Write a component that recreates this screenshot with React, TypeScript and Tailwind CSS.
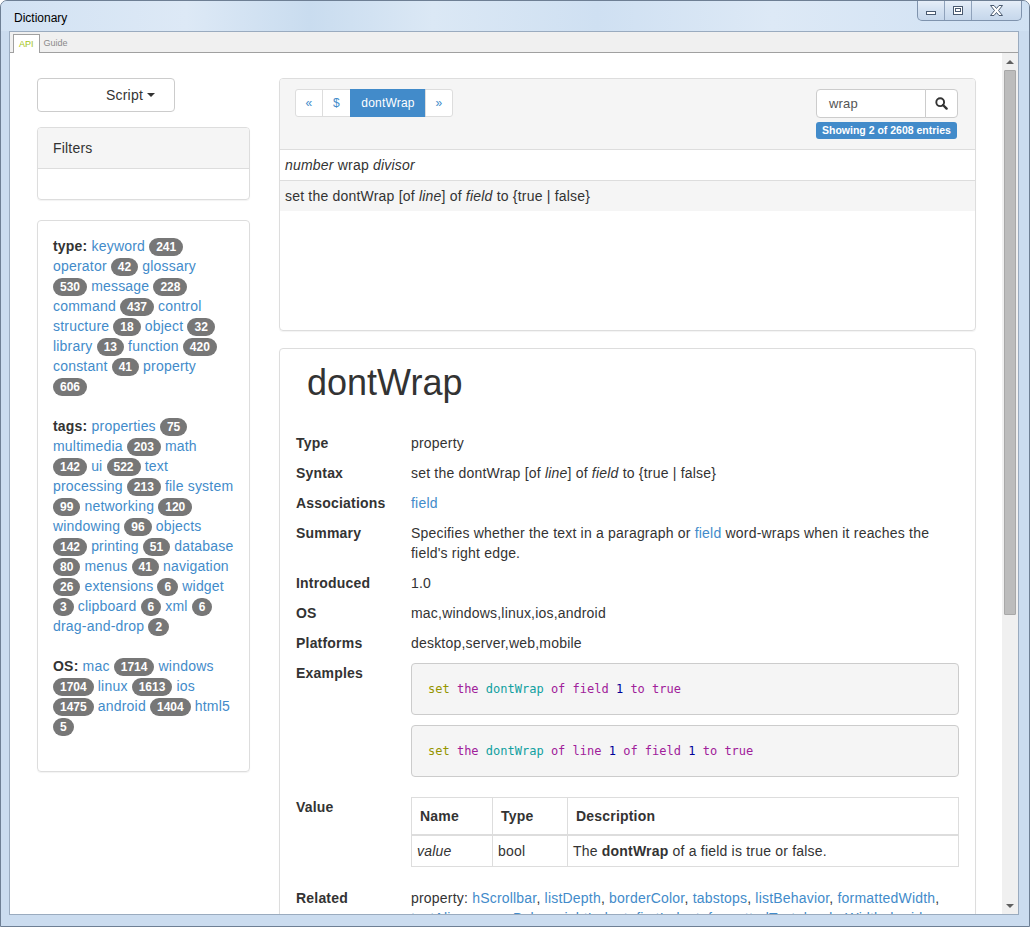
import React from 'react';

type Item = [string, number?];

// facet lines as they break in the panel
const typeLines: Item[][] = [
  [['keyword', 241]],
  [['operator', 42], ['glossary']],
  [['', 530], ['message', 228]],
  [['command', 437], ['control']],
  [['structure', 18], ['object', 32]],
  [['library', 13], ['function', 420]],
  [['constant', 41], ['property']],
  [['', 606]],
];

const tagLines: Item[][] = [
  [['properties', 75]],
  [['multimedia', 203], ['math']],
  [['', 142], ['ui', 522], ['text']],
  [['processing', 213], ['file system']],
  [['', 99], ['networking', 120]],
  [['windowing', 96], ['objects']],
  [['', 142], ['printing', 51], ['database']],
  [['', 80], ['menus', 41], ['navigation']],
  [['', 26], ['extensions', 6], ['widget']],
  [['', 3], ['clipboard', 6], ['xml', 6]],
  [['drag-and-drop', 2]],
];

const osLines: Item[][] = [
  [['mac', 1714], ['windows']],
  [['', 1704], ['linux', 1613], ['ios']],
  [['', 1475], ['android', 1404], ['html5']],
  [['', 5]],
];

const related = [
  'hScrollbar', 'listDepth', 'borderColor', 'tabstops', 'listBehavior', 'formattedWidth',
  'textAlign', 'spaceBelow', 'rightIndent', 'firstIndent', 'formattedText', 'borderWidth', 'hgrid',
  'vgrid', 'textSize', 'textFont', 'textStyle', 'threeD', 'showLines', 'lockText',
];

const Badge: React.FC<{ n: number }> = ({ n }) => (
  <span className="inline-block min-w-[10px] whitespace-nowrap rounded-[10px] bg-[#777] px-[7px] py-[3px] text-center align-middle text-[12px] font-bold leading-none tracking-normal text-white">
    {n}
  </span>
);

const FacetGroup: React.FC<{ label: string; lines: Item[][] }> = ({ label, lines }) => (
  <div className="mb-5">
    {lines.map((line, li) => (
      <div key={li} className="h-[20px] overflow-visible whitespace-nowrap">
        {li === 0 && (
          <>
            <b>{label}:</b>{' '}
          </>
        )}
        {line.map(([name, n], i) => (
          <React.Fragment key={i}>
            {i > 0 ? ' ' : ''}
            {name && <a className="cursor-pointer text-[#428bca]">{name}</a>}
            {name && n !== undefined ? ' ' : ''}
            {n !== undefined && <Badge n={n} />}
          </React.Fragment>
        ))}
      </div>
    ))}
  </div>
);

const Row: React.FC<{ label: string; children: React.ReactNode }> = ({ label, children }) => (
  <>
    <div className="font-bold">{label}</div>
    <div>{children}</div>
  </>
);

const K: React.FC<{ c: string; children: React.ReactNode }> = ({ c, children }) => (
  <span className={c}>{children}</span>
);

const kw = 'text-[#a0209a]';
const num = 'text-[#000099]';

const WindowButtons = () => (
  <div className="mr-[7px] flex h-[20px] overflow-hidden rounded-b-[5px] border border-t-0 border-[#7f93ad] bg-[linear-gradient(180deg,#e6eef8_0%,#d3e1f1_50%,#c6d7eb_100%)]">
    <div className="flex w-[27px] items-end justify-center border-r border-[#8fa2bb] pb-[5px]">
      <svg width="10" height="4" viewBox="0 0 10 4">
        <rect x="0.5" y="0.5" width="9" height="3" fill="#fff" stroke="#4a5a70" />
      </svg>
    </div>
    <div className="flex w-[27px] items-center justify-center border-r border-[#8fa2bb]">
      <svg width="10" height="9" viewBox="0 0 10 9">
        <rect x="0.5" y="0.5" width="9" height="8" fill="#fff" stroke="#4a5a70" />
        <rect x="2.5" y="2.5" width="5" height="3" fill="none" stroke="#4a5a70" />
      </svg>
    </div>
    <div className="flex w-[49px] items-center justify-center">
      <svg width="13" height="11" viewBox="0 0 13 11">
        <polygon
          points="0.5,0.5 4,0.5 6.5,3.5 9,0.5 12.5,0.5 8.5,5.5 12.5,10.5 9,10.5 6.5,7.5 4,10.5 0.5,10.5 4.5,5.5"
          fill="#fff"
          stroke="#4a5a70"
        />
      </svg>
    </div>
  </div>
);

export default function App() {
  return (
    <div className="flex h-[927px] w-[1030px] flex-col overflow-hidden rounded-t-[7px] border border-[#6e7f94] bg-[#cbdcef] font-['Liberation_Sans',Arial,sans-serif] text-[14px] leading-[20px] text-[#333]">
      {/* title bar */}
      <div className="flex h-[30px] shrink-0 items-start justify-between bg-[linear-gradient(90deg,#d2e2f3_0%,#dde9f6_18%,#c9dcef_30%,#dbe8f5_42%,#cfe0f2_58%,#dde9f6_75%,#d0e1f3_100%)]">
        <div className="pl-[13px] pt-[9px] text-[12px] leading-[16px] text-black">Dictionary</div>
        <WindowButtons />
      </div>

      {/* client area */}
      <div className="mb-[11px] ml-[8px] mr-[10px] flex min-h-0 flex-1 flex-col border border-[#9aabbf] bg-[#f0f0f0]">
        <div className="flex h-[21px] shrink-0 items-end border-b border-[#a0a0a0] bg-[#f0f0f0] pl-[3px] text-[9px] leading-[12px]">
          <div className="mb-[-1px] flex h-[19px] items-center border border-b-0 border-[#a0a0a0] bg-white px-[5px] text-[#a3c515]">
            API
          </div>
          <div className="flex h-[18px] items-center px-[4px] text-[#8a8a8a]">Guide</div>
        </div>

        <div className="flex min-h-0 flex-1">
          {/* web view */}
          <div className="min-w-0 flex-1 overflow-hidden bg-white tracking-[0.2px]">
            <div className="flex gap-[29px] pl-[27px] pt-[25px]">
              {/* left column */}
              <div className="w-[213px] shrink-0">
                <div className="flex h-[34px] w-[138px] items-center rounded-[4px] border border-[#ccc] bg-white pl-[68px]">
                  Script
                  <span className="ml-[4px] inline-block h-0 w-0 border-x-[4px] border-t-[4px] border-x-transparent border-t-[#333]" />
                </div>

                <div className="mt-[15px] overflow-hidden rounded-[4px] border border-[#ddd] shadow-[0_1px_1px_rgba(0,0,0,0.05)]">
                  <div className="flex h-[41px] items-center border-b border-[#ddd] bg-[#f5f5f5] px-[15px]">Filters</div>
                  <div className="h-[30px]" />
                </div>

                <div className="mt-[20px] rounded-[4px] border border-[#ddd] px-[15px] pb-[15px] pt-[15px] shadow-[0_1px_1px_rgba(0,0,0,0.05)]">
                  <FacetGroup label="type" lines={typeLines} />
                  <FacetGroup label="tags" lines={tagLines} />
                  <FacetGroup label="OS" lines={osLines} />
                </div>
              </div>

              {/* right column */}
              <div className="w-[697px] shrink-0">
                <div className="flex h-[253px] flex-col overflow-hidden rounded-[4px] border border-[#ddd] shadow-[0_1px_1px_rgba(0,0,0,0.05)]">
                  <div className="flex h-[71px] shrink-0 justify-between border-b border-[#ddd] bg-[#f5f5f5] pl-[15px] pr-[17px] pt-[10px]">
                    <div className="flex h-[28px] text-[12px] leading-[18px]">
                      <div className="flex w-[28px] items-center justify-center rounded-l-[3px] border border-[#ddd] bg-white text-[#428bca]">«</div>
                      <div className="-ml-px flex w-[29px] items-center justify-center border border-[#ddd] bg-white text-[#428bca]">$</div>
                      <div className="-ml-px flex w-[76px] items-center justify-center border border-[#428bca] bg-[#428bca] text-white">dontWrap</div>
                      <div className="-ml-px flex w-[28px] items-center justify-center rounded-r-[3px] border border-[#ddd] bg-white text-[#428bca]">»</div>
                    </div>
                    <div className="flex flex-col items-start">
                      <div className="flex h-[29px]">
                        <div className="flex w-[110px] items-center rounded-l-[4px] border border-[#ccc] bg-white px-[12px] text-[13px] text-[#555]">wrap</div>
                        <div className="-ml-px flex w-[33px] items-center justify-center rounded-r-[4px] border border-[#ccc] bg-white">
                          <svg width="13" height="13" viewBox="0 0 13 13">
                            <circle cx="5.2" cy="5.2" r="3.9" fill="none" stroke="#333" strokeWidth="1.9" />
                            <line x1="8" y1="8" x2="11.6" y2="11.6" stroke="#333" strokeWidth="2.4" strokeLinecap="round" />
                          </svg>
                        </div>
                      </div>
                      <div className="mt-[4px] flex h-[17px] items-center rounded-[3px] bg-[#428bca] px-[6px] text-[10.5px] font-bold leading-none tracking-normal text-white">
                        Showing 2 of 2608 entries
                      </div>
                    </div>
                  </div>
                  <div className="flex h-[31px] shrink-0 items-center border-b border-[#ddd] px-[5px]">
                    <span>
                      <i>number</i> wrap <i>divisor</i>
                    </span>
                  </div>
                  <div className="flex h-[30px] shrink-0 items-center bg-[#f5f5f5] px-[5px]">
                    <span>
                      set the dontWrap [of <i>line</i>] of <i>field</i> to {'{'}true | false{'}'}
                    </span>
                  </div>
                </div>

                <div className="mt-[17px] rounded-[4px] border border-[#ddd] px-[16px] pb-[20px] pt-[14px] shadow-[0_1px_1px_rgba(0,0,0,0.05)]">
                  <h1 className="mb-[30px] pl-[11px] text-[36px] leading-[40px] tracking-normal text-[#333]">dontWrap</h1>
                  <div className="grid grid-cols-[115px_1fr] gap-y-[10px]">
                    <Row label="Type">property</Row>
                    <Row label="Syntax">
                      set the dontWrap [of <i>line</i>] of <i>field</i> to {'{'}true | false{'}'}
                    </Row>
                    <Row label="Associations">
                      <a className="text-[#428bca]">field</a>
                    </Row>
                    <Row label="Summary">
                      Specifies whether the text in a paragraph or <a className="text-[#428bca]">field</a> word-wraps when it
                      reaches the
                      <br />
                      field's right edge.
                    </Row>
                    <Row label="Introduced">1.0</Row>
                    <Row label="OS">mac,windows,linux,ios,android</Row>
                    <Row label="Platforms">desktop,server,web,mobile</Row>
                    <Row label="Examples">
                      <div className="flex flex-col gap-[10px] pb-[10px] font-['DejaVu_Sans_Mono',monospace] text-[12px] leading-[18px] tracking-normal">
                        <div className="flex h-[52px] items-center rounded-[4px] border border-[#ccc] bg-[#f5f5f5] pl-[16px]">
                          <span className="whitespace-pre">
                            <K c="text-[#959500]">set</K> <K c={kw}>the</K> <K c="text-[#10a0a0]">dontWrap</K> <K c={kw}>of</K>{' '}
                            <K c={kw}>field</K> <K c={num}>1</K> <K c={kw}>to</K> <K c={kw}>true</K>
                          </span>
                        </div>
                        <div className="flex h-[52px] items-center rounded-[4px] border border-[#ccc] bg-[#f5f5f5] pl-[16px]">
                          <span className="whitespace-pre">
                            <K c="text-[#959500]">set</K> <K c={kw}>the</K> <K c="text-[#10a0a0]">dontWrap</K> <K c={kw}>of</K>{' '}
                            <K c={kw}>line</K> <K c={num}>1</K> <K c={kw}>of</K> <K c={kw}>field</K> <K c={num}>1</K>{' '}
                            <K c={kw}>to</K> <K c={kw}>true</K>
                          </span>
                        </div>
                      </div>
                    </Row>
                    <Row label="Value">
                      <table className="mb-[11px] w-full border-collapse border border-[#ddd] text-left">
                        <thead>
                          <tr>
                            <th className="w-[81px] border border-b-2 border-[#ddd] px-[8px] py-[8px]">Name</th>
                            <th className="w-[75px] border border-b-2 border-[#ddd] px-[8px] py-[8px]">Type</th>
                            <th className="border border-b-2 border-[#ddd] px-[8px] py-[8px]">Description</th>
                          </tr>
                        </thead>
                        <tbody>
                          <tr>
                            <td className="border border-[#ddd] px-[5px] py-[5px]">
                              <i>value</i>
                            </td>
                            <td className="border border-[#ddd] px-[5px] py-[5px]">bool</td>
                            <td className="border border-[#ddd] px-[5px] py-[5px]">
                              The <b>dontWrap</b> of a field is true or false.
                            </td>
                          </tr>
                        </tbody>
                      </table>
                    </Row>
                    <Row label="Related">
                      property:{' '}
                      {related.map((r, i) => (
                        <React.Fragment key={r}>
                          <a className="text-[#428bca]">{r}</a>
                          {i < related.length - 1 ? ', ' : ''}
                        </React.Fragment>
                      ))}
                    </Row>
                  </div>
                </div>
              </div>
            </div>
          </div>

          {/* scrollbar */}
          <div className="flex w-[16px] shrink-0 flex-col bg-[#f0f0f0]">
            <div className="flex h-[17px] items-center justify-center">
              <span className="inline-block h-0 w-0 border-x-[4px] border-b-[4px] border-x-transparent border-b-[#606060]" />
            </div>
            <div className="mx-[2px] h-[545px] rounded-[1px] border border-[#a8a8a8] bg-[#bcbcbc]" />
            <div className="flex-1" />
            <div className="flex h-[17px] items-center justify-center">
              <span className="inline-block h-0 w-0 border-x-[4px] border-t-[4px] border-x-transparent border-t-[#606060]" />
            </div>
          </div>
        </div>
      </div>
    </div>
  );
}
